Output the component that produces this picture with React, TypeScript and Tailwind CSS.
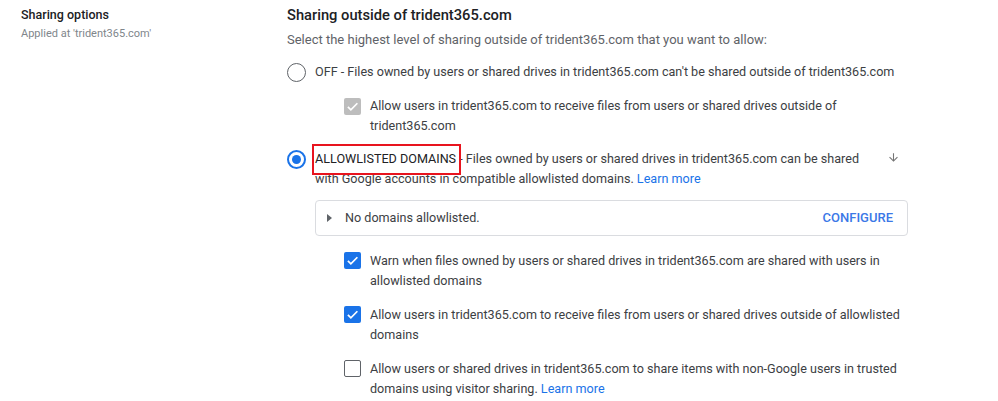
import React from "react";

const Radio = ({ checked }: { checked?: boolean }) =>
  checked ? (
    <div className="w-[19px] h-[19px] shrink-0 rounded-full border-2 border-[#1a73e8] flex items-center justify-center">
      <div className="w-[9px] h-[9px] rounded-full bg-[#1a73e8]" />
    </div>
  ) : (
    <div className="w-[19px] h-[19px] shrink-0 rounded-full border-[1.5px] border-[#5f6368]" />
  );

const Check = ({ state }: { state: "on" | "off" | "disabled" }) => {
  if (state === "off")
    return <div className="w-[17px] h-[17px] shrink-0 rounded-[2px] border-[1.5px] border-[#5f6368]" />;
  const bg = state === "on" ? "bg-[#1a73e8]" : "bg-[#bdbdbd]";
  return (
    <div className={`w-[17px] h-[17px] shrink-0 rounded-[2px] flex items-center justify-center ${bg}`}>
      <svg width="13" height="13" viewBox="0 0 24 24">
        <path d="M3.5 12.5l5.5 5.5L21 6" fill="none" stroke="#fff" strokeWidth="3.2" />
      </svg>
    </div>
  );
};

export default function App() {
  return (
    <div className="w-[998px] h-[401px] bg-white overflow-hidden font-['Roboto',sans-serif] text-[12.6px] leading-[20px] text-[#3c4043] flex">
      <div className="w-[287px] shrink-0 pl-[21px] pt-[6px]">
        <div className="text-[12.5px] font-medium text-[#202124] leading-[18px]">Sharing options</div>
        <div className="text-[11px] text-[#80868b] leading-[16px] mt-[2px]">Applied at 'trident365.com'</div>
      </div>
      <div className="w-[621px] shrink-0 pt-[5px]">
        <div className="text-[14.7px] font-medium text-[#202124] leading-[20px]">Sharing outside of trident365.com</div>
        <div className="text-[13px] text-[#5f6368] mt-[5px]">Select the highest level of sharing outside of trident365.com that you want to allow:</div>

        <div className="flex items-center gap-[9px] mt-[12px]">
          <Radio />
          <div>OFF - Files owned by users or shared drives in trident365.com can't be shared outside of trident365.com</div>
        </div>

        <div className="flex gap-[9px] mt-[14px] pl-[57px] pr-[5px]">
          <div className="pt-[2px]"><Check state="disabled" /></div>
          <div>Allow users in trident365.com to receive files from users or shared drives outside of trident365.com</div>
        </div>

        <div className="flex gap-[9px] mt-[13px] items-start">
          <div className="pt-[1px]"><Radio checked /></div>
          <div className="flex-1">
            <span className="text-[#202124] relative">
              <span className="absolute left-[-3px] top-[-7px] w-[149px] h-[31px] border-2 border-[#e8141e]" />
              ALLOWLISTED DOMAINS
            </span>{" "}
            - Files owned by users or shared drives in trident365.com can be shared with Google accounts in compatible allowlisted domains.{" "}
            <span className="text-[#1a73e8]">Learn more</span>
          </div>
          <div className="w-[28px] shrink-0 pl-[7px] pt-[2px]">
            <svg width="13" height="13" viewBox="0 0 24 24">
              <path d="M20 12l-1.41-1.41L13 16.17V4h-2v12.17l-5.58-5.59L4 12l8 8 8-8z" fill="#757575" />
            </svg>
          </div>
        </div>

        <div className="ml-[28px] mt-[11px] h-[36px] border border-[#dadce0] rounded-[4px] flex items-center pl-[11px] pr-[14px]">
          <svg width="5" height="8" viewBox="0 0 5 8"><path d="M0 0l5 4-5 4z" fill="#5f6368" /></svg>
          <div className="ml-[13px] flex-1">No domains allowlisted.</div>
          <div className="text-[#3b78e7] font-medium text-[13px]">CONFIGURE</div>
        </div>

        <div className="pl-[57px] pr-[5px]">
          <div className="flex gap-[9px] mt-[15px]">
            <div className="pt-[1px]"><Check state="on" /></div>
            <div>Warn when files owned by users or shared drives in trident365.com are shared with users in allowlisted domains</div>
          </div>
          <div className="flex gap-[9px] mt-[14px]">
            <div className="pt-[1px]"><Check state="on" /></div>
            <div>Allow users in trident365.com to receive files from users or shared drives outside of allowlisted domains</div>
          </div>
          <div className="flex gap-[9px] mt-[14px]">
            <div className="pt-[1px]"><Check state="off" /></div>
            <div>Allow users or shared drives in trident365.com to share items with non-Google users in trusted domains using visitor sharing. <span className="text-[#1a73e8]">Learn more</span></div>
          </div>
        </div>
      </div>
    </div>
  );
}
